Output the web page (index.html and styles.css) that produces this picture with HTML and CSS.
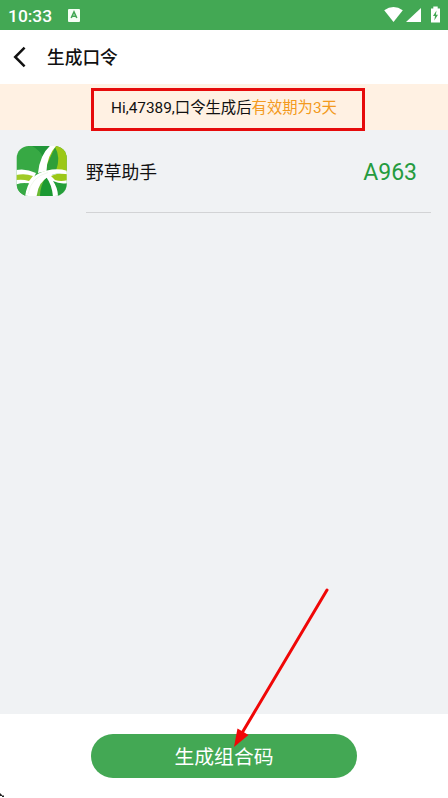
FILE: index.html
```html
<!DOCTYPE html>
<html lang="zh-CN">
<head>
<meta charset="utf-8">
<title>生成口令</title>
<link rel="stylesheet" href="styles.css">
</head>
<body>
<div class="screen">
  <header class="status">
    <span class="clock">10:33</span>
    <svg class="input-icon" width="12" height="13" viewBox="0 0 12 13">
      <rect width="12" height="13" rx="1" fill="#f5fff5"/>
      <path d="M3.2 9 6 3 8.8 9M4.3 7.2H7.7" fill="none" stroke="#43a854" stroke-width="1.6"/>
    </svg>
    <svg class="system-icons" width="58" height="20" viewBox="0 0 58 20" fill="#fff">
      <path d="M-.8 5.3Q8.5-1.3 17.8 5.3L8.5 17Z"/>
      <path d="M36 3V17H21Z"/>
      <path d="M46 3.5H48.3V1.5H52.7V3.5H55V17.5H46V3.5Z"/>
      <path d="M51.5 5.5 48 11H50L49.3 15.5 53 9.8H50.9Z" fill="#43a854"/>
    </svg>
  </header>
  <nav class="nav">
    <svg class="back" width="14" height="22" viewBox="0 0 14 22">
      <path d="M11.6 1.7 2.2 11 11.6 20.3" fill="none" stroke="#111" stroke-width="2.5"/>
    </svg>
    <h1 class="title">生成口令</h1>
  </nav>
  <div class="notice">
    <p class="notice-text">Hi,47389,口令生成后<span class="validity">有效期为3天</span></p>
    <div class="highlight"></div>
  </div>
  <main class="list">
    <div class="item">
      <svg class="app-icon" width="52" height="52" viewBox="0 0 52 52">
        <defs><clipPath id="tile"><rect x=".7" y="1" width="50" height="50" rx="12"/></clipPath></defs>
        <g clip-path="url(#tile)">
          <rect width="52" height="52" fill="#37a944"/>
          <path d="M14 0Q23 4 27 12L37 0Z" fill="#219638"/>
          <path d="M36 0H52V27H27Z" fill="#9cc817"/>
          <path d="M39 2Q45 12 40 26H28Z" fill="#2f9f38"/>
          <path d="M0 25Q10 23 20 28L15 39Q8 37 0 39.5Z" fill="#fff"/>
          <path d="M0 30Q9 28 17 31L13 36Q7 34 0 35Z" fill="#a0ca26"/>
          <path d="M0 39.5Q6 41 12.5 38L9 52H0Z" fill="#37a944"/>
          <path d="M35 0H41Q31 10 30.5 26L22 28Q24 9 35 0Z" fill="#fff"/>
          <path d="M28 31 52 27V52H20Z" fill="#fff"/>
          <path d="M30.5 32.5Q36 40 37 52H20Q22 40 30.5 32.5Z" fill="#1b9932"/>
          <path d="M29.5 33Q21 41 20 52H24Q24 41 29.5 33Z" fill="#6dbb35"/>
          <path d="M35 31Q43 27.5 52 29V35Q45 37 39 35Z" fill="#9cc817"/>
          <path d="M37 36Q44 39.5 52 38V52H42Q42 43 37 36Z" fill="#249e39"/>
          <path d="M9 52Q12 29 31 25.5Q42 23 52 26V29.5Q41 27 33 31Q22 37 20.5 52Z" fill="#fff"/>
          <path d="M12 49Q15 32 32 27.5" fill="none" stroke="#d8edcf" stroke-width=".4"/>
        </g>
      </svg>
      <div class="item-body">
        <span class="name">野草助手</span>
        <span class="code">A963</span>
      </div>
    </div>
  </main>
  <footer class="footer">
    <button class="generate" type="button">生成组合码</button>
  </footer>
  <svg class="pointer-arrow" width="100" height="166" viewBox="0 0 100 166">
    <path d="M97 6 12 149" stroke="#f00707" stroke-width="3" stroke-linecap="round"/>
    <path d="M4 163 7.5 144.5 18.5 151Z" fill="#f00707"/>
  </svg>
  <svg class="corner-mark" width="6" height="6" viewBox="0 0 6 6">
    <path d="M0 1.5H1V2.5H2V3.5H4V5H2V4H0Z" fill="#222"/>
  </svg>
</div>
</body>
</html>
```

FILE: styles.css
```css
* { box-sizing: border-box; }
body { margin: 0; font-family: Roboto, "Noto Sans CJK SC", sans-serif; color: #111; }
.screen { position: relative; display: flex; flex-direction: column; width: 448px; height: 798px; overflow: hidden; background: #fff; }
.status { display: flex; align-items: center; height: 30px; padding: 0 5px 0 8px; background: #43a854; color: #fff; }
.clock { width: 60px; padding-top: 2px; font-size: 17.4px; font-weight: 500; line-height: 30px; }
.system-icons { margin-left: auto; overflow: visible; }
.nav { display: flex; align-items: center; height: 54px; padding-left: 13px; }
.title { margin: 0 0 0 20px; padding-top: 2px; font-size: 17.7px; font-weight: 500; line-height: 26px; }
.notice { position: relative; height: 46px; padding-left: 111px; background: #fff1e3; }
.notice-text { margin: 0; font-size: 15.35px; line-height: 48px; white-space: nowrap; }
.validity { color: #f39a20; }
.highlight { position: absolute; left: 91px; top: 4px; width: 274px; height: 43px; border: 3px solid #e60b0b; }
.list { flex: 1; background: #f0f2f4; }
.item { display: flex; padding: 15px 17px 0 16px; }
.item-body { display: flex; flex: 1; justify-content: space-between; height: 68px; margin-left: 18px; padding-right: 14px; border-bottom: 1px solid #d2d3d5; }
.app-icon { flex: none; }
.name { font-size: 17.8px; line-height: 55px; }
.code { color: #259b3e; font-size: 23px; line-height: 56px; }
.footer { display: flex; justify-content: center; height: 84px; padding-top: 20px; background: #fff; }
.generate { width: 266px; height: 44px; padding: 2px 0 0; border: 0; border-radius: 22px; background: #43a854; color: #fff; font-family: inherit; font-size: 19.8px; line-height: 44px; }
.pointer-arrow { position: absolute; left: 230px; top: 584px; }
.corner-mark { position: absolute; left: 0; bottom: 0; }
```
